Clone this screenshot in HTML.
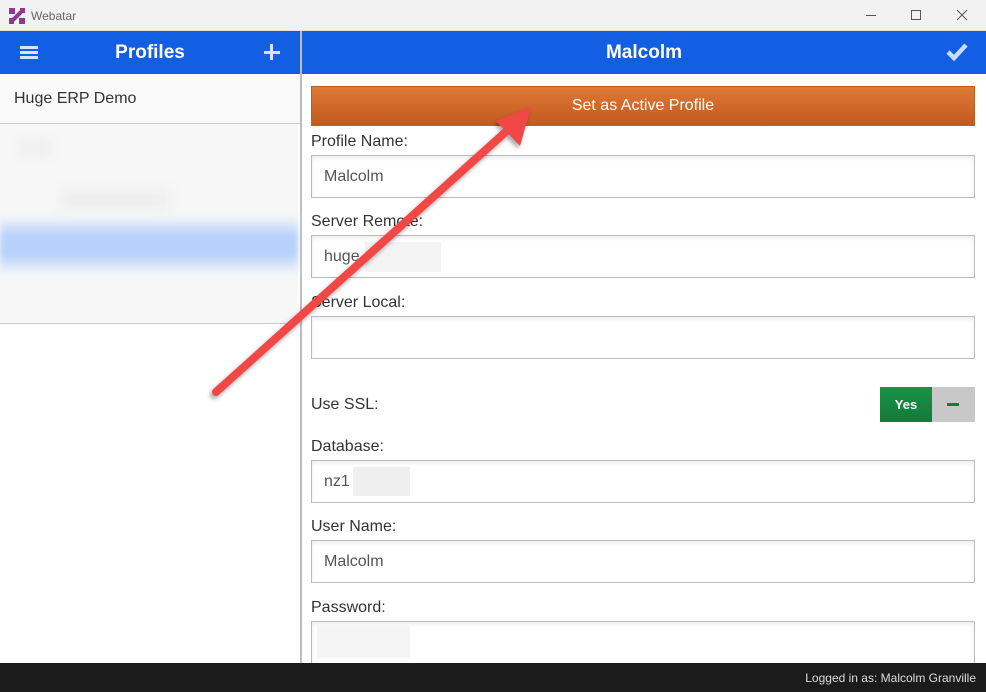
<!DOCTYPE html>
<html><head><meta charset="utf-8"><style>
*{margin:0;padding:0;box-sizing:border-box}
body{width:986px;height:692px;overflow:hidden;background:#fff;font-family:"Liberation Sans",Arial,sans-serif;position:relative}
.a{position:absolute}
.lbl{position:absolute;left:311px;font-size:16px;color:#333}
.inp{position:absolute;left:311px;width:664px;height:43px;border:1px solid #bbb;background:#fff;box-shadow:inset 0 2px 4px rgba(0,0,0,.08);font-size:16px;color:#555;padding:12px 0 0 12px}
.blur{position:absolute;background:#eee;filter:blur(2px)}
</style></head><body>
<div class="a" style="left:0;top:0;width:986px;height:31px;background:#f2f2f2;border-bottom:1px solid #e0e0e0"></div>
<svg class="a" style="left:9px;top:8px" width="16" height="16" viewBox="0 0 16 16"><rect x="0" y="0" width="6" height="6" fill="#8b3a8f"/><rect x="10" y="10" width="6" height="6" fill="#8b3a8f"/><path d="M1 15 L15 1" stroke="#8b3a8f" stroke-width="4"/><rect x="0" y="10" width="5" height="6" fill="#8b3a8f"/><rect x="11" y="0" width="5" height="5" fill="#8b3a8f"/></svg>
<div class="a" style="left:31px;top:9px;font-size:12px;color:#666">Webatar</div>
<div class="a" style="left:866px;top:15px;width:10px;height:1px;background:#555"></div>
<div class="a" style="left:911px;top:10px;width:10px;height:10px;border:1px solid #555"></div>
<svg class="a" style="left:956px;top:9px" width="12" height="12"><path d="M1 1L11 11M11 1L1 11" stroke="#555" stroke-width="1"/></svg>
<div class="a" style="left:0;top:31px;width:986px;height:43px;background:#135fe3"></div>
<div class="a" style="left:300px;top:31px;width:2px;height:632px;background:#bdbdbd"></div>
<div class="a" style="left:20px;top:46px;width:18px;height:3px;background:#d6e4ff;box-shadow:0 5px 0 #d6e4ff,0 10px 0 #d6e4ff"></div>
<div class="a" style="left:0;top:42px;width:300px;text-align:center;color:#fff;font-weight:bold;font-size:19px">Profiles</div>
<div class="a" style="left:264px;top:51px;width:16px;height:3px;background:#d6e4ff"></div>
<div class="a" style="left:270px;top:44px;width:3px;height:16px;background:#d6e4ff"></div>
<div class="a" style="left:302px;top:42px;width:684px;text-align:center;color:#fff;font-weight:bold;font-size:19px">Malcolm</div>
<svg class="a" style="left:945px;top:42px" width="24" height="20" viewBox="0 0 24 20"><path d="M3 10L9 16L21 3" stroke="#c9dcff" stroke-width="4.5" fill="none"/></svg>
<div class="a" style="left:0;top:74px;width:300px;height:50px;background:#fafafa;border-bottom:1px solid #ccc"></div>
<div class="a" style="left:14px;top:90px;font-size:16px;color:#333">Huge ERP Demo</div>
<div class="a" style="left:0;top:125px;width:298px;height:199px;background:#f7f7f7;border-bottom:1px solid #ccc"></div>
<div class="a" style="left:0;top:215px;width:298px;height:60px;background:linear-gradient(#f7f7f7,#b6d1fb 35%,#b6d1fb 65%,#f7f7f7);filter:blur(3px)"></div>
<div class="blur" style="left:20px;top:140px;width:30px;height:16px;filter:blur(5px)"></div>
<div class="blur" style="left:60px;top:190px;width:110px;height:20px;filter:blur(6px)"></div>
<div class="a" style="left:311px;top:86px;width:664px;height:40px;background:linear-gradient(#de7836,#c25a1e);border:1px solid #c0601f;color:#fff;text-align:center;font-size:16px;padding-top:10px">Set as Active Profile</div>
<div class="lbl" style="top:133px">Profile Name:</div>
<div class="inp" style="top:155px">Malcolm</div>
<div class="lbl" style="top:213px">Server Remote:</div>
<div class="inp" style="top:235px">huge</div>
<div class="a" style="left:365px;top:242px;width:76px;height:30px;background:#f3f3f3"></div>
<div class="lbl" style="top:294px">Server Local:</div>
<div class="inp" style="top:316px"></div>
<div class="lbl" style="top:396px">Use SSL:</div>
<div class="a" style="left:880px;top:387px;width:52px;height:35px;background:linear-gradient(#1a9147,#137a3a);color:#fff;font-weight:bold;font-size:13px;text-align:center;padding-top:10px">Yes</div>
<div class="a" style="left:932px;top:387px;width:43px;height:35px;background:#c8c8c8"></div>
<div class="a" style="left:947px;top:403px;width:12px;height:3px;background:#137a3a"></div>
<div class="lbl" style="top:438px">Database:</div>
<div class="inp" style="top:460px">nz1</div>
<div class="a" style="left:353px;top:467px;width:57px;height:29px;background:#efefef"></div>
<div class="lbl" style="top:518px">User Name:</div>
<div class="inp" style="top:540px">Malcolm</div>
<div class="lbl" style="top:599px">Password:</div>
<div class="inp" style="top:621px;height:45px"></div>
<div class="a" style="left:317px;top:625px;width:93px;height:33px;background:#f5f5f5"></div>
<div class="a" style="left:0;top:663px;width:986px;height:29px;background:#1b1b1b"></div>
<div class="a" style="right:10px;top:671px;font-size:12px;color:#ddd">Logged in as: Malcolm Granville</div>
<svg class="a" style="left:0;top:0" width="986" height="692"><defs><filter id="s"><feDropShadow dx="-2" dy="3" stdDeviation="2" flood-opacity=".35"/></filter></defs>
<g filter="url(#s)"><path d="M216 392L510 128" stroke="#f24646" stroke-width="8" stroke-linecap="round"/><path d="M531 107L496 121L520 146Z" fill="#f24646"/></g></svg>
</body></html>
